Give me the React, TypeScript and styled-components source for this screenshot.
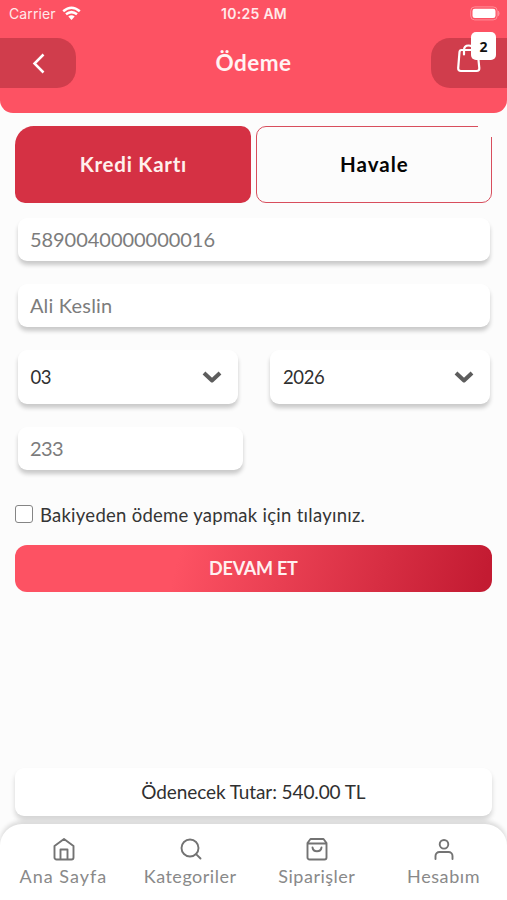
import React from "react";
import styled, { createGlobalStyle } from "styled-components";

const GlobalStyle = createGlobalStyle`
  * { box-sizing: border-box; }
  body { margin: 0; background: #fcfcfc; font-family: Lato, "Open Sans", sans-serif; }
  button, select { font-family: inherit; }
`;

const Screen = styled.div`
  display: flex;
  flex-direction: column;
  width: 507px;
  height: 900px;
  overflow: hidden;
  background: #fcfcfc;
`;

const Header = styled.header`
  height: 113px;
  flex: none;
  background: #fd5263;
  border-radius: 0 0 13px 13px;
`;

const StatusBar = styled.div`
  display: grid;
  grid-template-columns: 1fr auto 1fr;
  align-items: center;
  height: 28px;
  padding: 0 7px 0 9px;
  margin-bottom: 10px;
  color: #ffe9ea;
  font: 14px/28px Inter, sans-serif;
`;

const Carrier = styled.div`
  display: flex;
  align-items: center;
  gap: 6px;
  letter-spacing: 0.1px;

  svg {
    margin-top: -2px;
  }
`;

const Clock = styled.div`
  margin-left: -1px;
  font-size: 14px;
  font-weight: 600;
  letter-spacing: 0.3px;
`;

const Battery = styled.svg`
  justify-self: end;
  margin-top: -2px;
`;

const TitleBar = styled.div`
  display: flex;
  justify-content: space-between;
  align-items: center;
  height: 50px;
`;

const SideButton = styled.button<{ $side: "left" | "right" }>`
  position: relative;
  display: flex;
  align-items: center;
  width: 76px;
  height: 50px;
  border: 0;
  padding: ${(p) => (p.$side === "left" ? "0 0 0 29px" : "0 0 11px 25px")};
  background: #d03d4c;
  color: #fff;
  border-radius: ${(p) => (p.$side === "left" ? "0 19px 19px 0" : "19px 0 0 19px")};
`;

const Badge = styled.span`
  position: absolute;
  top: -6px;
  right: 11px;
  width: 25px;
  height: 28px;
  border-radius: 5px;
  background: #fff;
  color: #111;
  font: 700 14px/29px "Noto Sans", sans-serif;
  text-align: center;
`;

const Title = styled.h1`
  margin: 0;
  color: #fff3f3;
  font-size: 22.5px;
  line-height: 50px;
  font-weight: 700;
  letter-spacing: 0.5px;
`;

const Content = styled.main`
  display: flex;
  flex-direction: column;
  flex: 1;
  padding: 12.5px 15px 0 15.4px;
`;

const Tabs = styled.div`
  display: grid;
  grid-template-columns: 236px 236px;
  gap: 5px;
  height: 77.5px;
`;

const Tab = styled.button<{ $active?: boolean }>`
  border: ${(p) => (p.$active ? "0" : "1px solid #d84e5d")};
  border-radius: ${(p) => (p.$active ? "19px 10px 10px 10px" : "10px")};
  background: ${(p) => (p.$active ? "#d53144" : "#fcfcfc")};
  color: ${(p) => (p.$active ? "#fff0ed" : "#050505")};
  padding: 0;
  font-size: 20.5px;
  font-weight: 700;
  letter-spacing: ${(p) => (p.$active ? "0.75px" : "1px")};
`;

const TabSlot = styled.div`
  position: relative;
  display: grid;
`;

const CornerGap = styled.span`
  position: absolute;
  top: -1px;
  right: -1px;
  width: 15px;
  height: 12px;
  background: #fcfcfc;
`;

const Form = styled.section`
  display: flex;
  flex-direction: column;
  padding: 15px 1.6px 0 2.5px;
`;

const Field = styled.div<{ $short?: boolean; $spacing?: string }>`
  width: ${(p) => (p.$short ? "225px" : "100%")};
  height: 42.5px;
  margin-bottom: 23.5px;
  padding-left: 12px;
  border-radius: 9px;
  background: #fff;
  box-shadow: 0 4px 4px rgba(0, 0, 0, 0.2);
  color: #7c7c7c;
  font-size: 20px;
  line-height: 42px;
  letter-spacing: ${(p) => p.$spacing ?? "-0.03px"};
`;

const SelectRow = styled.div`
  display: flex;
  justify-content: space-between;
  margin-bottom: 23px;
`;

const Select = styled.div`
  display: flex;
  align-items: center;
  justify-content: space-between;
  width: 220px;
  height: 54px;
  padding: 0 16px 0 12.5px;
  border-radius: 9px;
  background: #fff;
  box-shadow: 0 4px 4px rgba(0, 0, 0, 0.2);
  color: #303030;
  font-size: 18.5px;
  letter-spacing: -0.35px;
`;

const BalanceOption = styled.label`
  display: flex;
  align-items: center;
  gap: 6.5px;
  height: 22px;
  margin-top: 10px;
  color: #353535;
  font-size: 18.5px;
  line-height: 22px;
  letter-spacing: 0.27px;
  white-space: nowrap;
`;

const BalanceText = styled.span`
  padding-top: 1px;
`;

const CheckBox = styled.span`
  width: 18px;
  height: 18px;
  border: 1.5px solid #858585;
  border-radius: 3px;
  background: #fff;
`;

const ContinueButton = styled.button`
  height: 47.5px;
  width: 477px;
  margin-top: 19.5px;
  border: 0;
  padding: 0 1px 0 0;
  border-radius: 12px;
  background: linear-gradient(105deg, #fd5263 0%, #fd5263 34%, #c31b32 98%);
  color: #fff0f0;
  font-size: 18px;
  font-weight: 700;
  letter-spacing: -0.25px;
`;

const Total = styled.div`
  width: 477px;
  height: 48px;
  margin-top: auto;
  margin-bottom: 8px;
  padding-right: 1px;
  border-radius: 9px;
  background: #fff;
  box-shadow: 0 4px 5px rgba(0, 0, 0, 0.16);
  color: #303030;
  font-size: 19px;
  line-height: 47px;
  text-align: center;
  letter-spacing: -0.1px;
`;

const BottomNav = styled.nav`
  display: grid;
  grid-template-columns: repeat(4, 1fr);
  height: 76px;
  flex: none;
  padding-top: 14px;
  border-radius: 22px 22px 0 0;
  background: #fff;
  box-shadow: 0 -3px 4px rgba(0, 0, 0, 0.13);
`;

const NavItem = styled.a<{ $spacing: string }>`
  display: flex;
  flex-direction: column;
  align-items: center;
  gap: 2px;
  color: #898989;
  font-size: 18px;
  line-height: 25px;
  letter-spacing: ${(p) => p.$spacing};
  white-space: nowrap;
`;

const NavIcon = styled.svg`
  flex: none;
  margin-left: 1px;
  stroke: #737373;
  stroke-width: 1.9;
  fill: none;
  stroke-linecap: round;
  stroke-linejoin: round;
`;

const Chevron = () => (
  <svg width="20" height="14" viewBox="0 0 20 14" fill="none" stroke="#5d5d5d" strokeWidth="4">
    <path d="M2 3 10 10.5 18 3" strokeLinejoin="round" />
  </svg>
);

const navItems = [
  {
    label: "Ana Sayfa",
    spacing: "1px",
    icon: <path d="M1.500 8 11 1l9.500 7v11.500a2 2 0 0 1-2 2h-15a2 2 0 0 1-2-2ZM7.500 21.500v-10h7v10" />,
  },
  {
    label: "Kategoriler",
    spacing: "0.5px",
    icon: (
      <>
        <circle cx="10" cy="10" r="8.500" />
        <path d="m16.300 16.300 4.200 4.200" />
      </>
    ),
  },
  {
    label: "Siparişler",
    spacing: "0.5px",
    icon: (
      <>
        <path d="M4.500 1h13l3 4v14.500a2 2 0 0 1-2 2h-15a2 2 0 0 1-2-2V5ZM1.500 5.500h19" />
        <path d="M6.500 9.500c.7 5 8.300 5 9 0" />
      </>
    ),
  },
  {
    label: "Hesabım",
    spacing: "0.6px",
    icon: (
      <>
        <circle cx="11" cy="6.300" r="4.300" />
        <path d="M2.500 21v-3a4 4 0 0 1 4-4h9a4 4 0 0 1 4 4v3" />
      </>
    ),
  },
];

export default function App() {
  return (
    <Screen>
      <GlobalStyle />
      <Header>
        <StatusBar>
          <Carrier>
            Carrier
            <svg width="19" height="15" viewBox="0 0 19 15" fill="none" stroke="#fff" strokeWidth="2.500">
              <path d="M1.200 5.300Q9.500-1.800 17.800 5.300M4 8.300Q9.500 3.900 15 8.300" />
              <path d="M6.300 10.500Q9.500 8 12.700 10.500L9.500 14Z" fill="#fff" stroke="none" />
            </svg>
          </Carrier>
          <Clock>10:25 AM</Clock>
          <Battery width="30" height="15" viewBox="0 0 30 15">
            <rect x=".7" y=".9" width="26.500" height="13" rx="4" fill="none" stroke="#ff8f9a" />
            <rect x="2.500" y="2.800" width="23" height="9.200" rx="2.300" fill="#fff" />
            <path d="M28.400 5.200q1.500 2.200 0 4.500Z" fill="#ffa5ad" stroke="#ff8f9a" />
          </Battery>
        </StatusBar>
        <TitleBar>
          <SideButton $side="left" aria-label="Geri">
            <svg width="20" height="24" viewBox="0 0 20 24" fill="none" stroke="#fff" strokeWidth="2.500">
              <path d="M14.500 4 5.500 13l9 9" transform="translate(0 -.5)" />
            </svg>
          </SideButton>
          <Title>Ödeme</Title>
          <SideButton $side="right" aria-label="Sepet">
            <svg width="26" height="30" viewBox="0 0 26 30" fill="none" stroke="#fff" strokeWidth="2.200" strokeLinejoin="round" strokeLinecap="round">
              <path d="M5.500 7h14q2 0 2.200 2l1.600 16q.2 3-2.800 3H5q-3 0-2.800-3L3.500 9q.2-2 2-2ZM8 11.500V7Q8 2.500 12.500 2.500T17 7" />
            </svg>
            <Badge>2</Badge>
          </SideButton>
        </TitleBar>
      </Header>
      <Content>
        <Tabs>
          <Tab $active>Kredi Kartı</Tab>
          <TabSlot>
            <Tab>Havale</Tab>
            <CornerGap />
          </TabSlot>
        </Tabs>
        <Form>
          <Field>5890040000000016</Field>
          <Field $spacing="0.2px">Ali Keslin</Field>
          <SelectRow>
            <Select>
              03
              <Chevron />
            </Select>
            <Select>
              2026
              <Chevron />
            </Select>
          </SelectRow>
          <Field $short $spacing="-0.5px">233</Field>
        </Form>
        <BalanceOption>
          <CheckBox />
          <BalanceText>Bakiyeden ödeme yapmak için tılayınız.</BalanceText>
        </BalanceOption>
        <ContinueButton>DEVAM ET</ContinueButton>
        <Total>Ödenecek Tutar: 540.00 TL</Total>
      </Content>
      <BottomNav>
        {navItems.map((item) => (
          <NavItem key={item.label} $spacing={item.spacing}>
            <NavIcon width="22" height="24" viewBox="0 0 22 24">
              {item.icon}
            </NavIcon>
            {item.label}
          </NavItem>
        ))}
      </BottomNav>
    </Screen>
  );
}
